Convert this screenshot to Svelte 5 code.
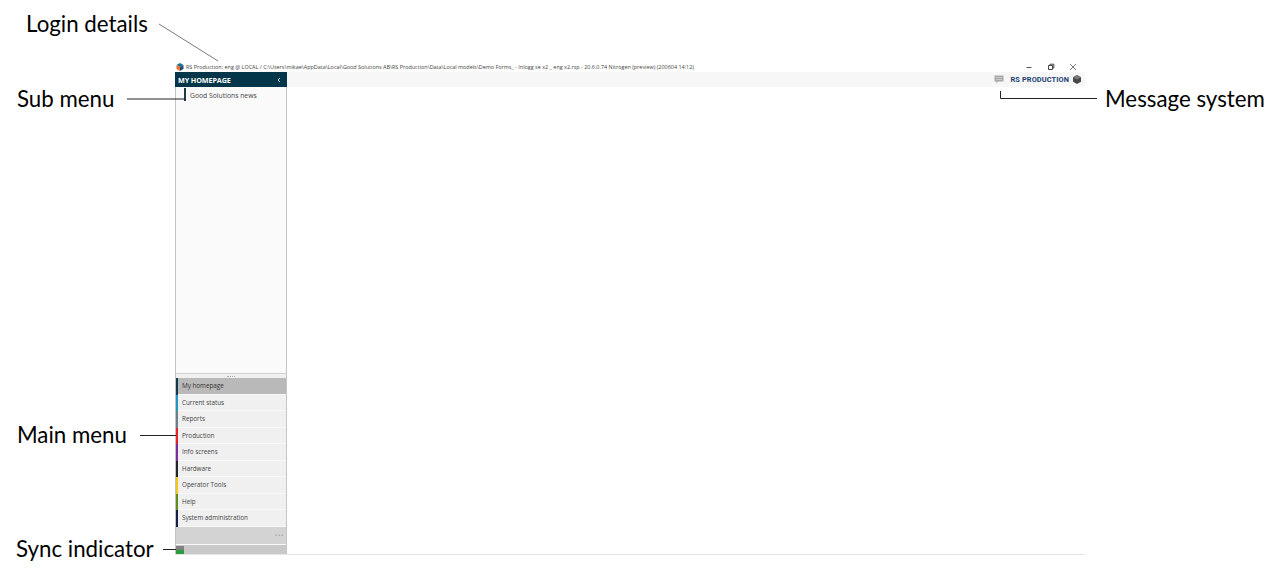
<script>
  // main menu entries with their colour strip
  const menu = [
    { label: "My homepage", color: "#0f3a4c", active: true },
    { label: "Current status", color: "#1e97c6" },
    { label: "Reports", color: "#6c7f8d" },
    { label: "Production", color: "#e8202a" },
    { label: "Info screens", color: "#7a2d9c" },
    { label: "Hardware", color: "#23272a" },
    { label: "Operator Tools", color: "#f4c61c" },
    { label: "Help", color: "#5f8e1e" },
    { label: "System administration", color: "#161f4e" },
  ];

  const title =
    "C:\\Users\\mikae\\AppData\\Local\\Good Solutions AB\\RS Production\\Data\\Local models\\Demo Forms_ - Inlogg se x2 _ eng x2.rsp - 20.6.0.74 Nitrogen (preview) (200604 14:12)";
</script>

<div class="page">
  <div class="window">
    <div class="titlebar">
      <svg class="app-icon" viewBox="0 0 8 8" width="8" height="8">
        <path d="M4 0 L7.5 2 L4 4 L0.5 2 Z" fill="#1f6f92" />
        <path d="M0.5 2 L4 4 L4 8 L0.5 6 Z" fill="#e8702a" />
        <path d="M7.5 2 L4 4 L4 8 L7.5 6 Z" fill="#2b4a6b" />
      </svg>
      <span class="title">RS Production: eng @ LOCAL / {title}</span>
      <div class="win-buttons">
        <svg viewBox="0 0 8 8" width="8" height="8"><path d="M1.5 4.5 H6.5" stroke="#555" /></svg>
        <svg viewBox="0 0 8 8" width="8" height="8">
          <path d="M1.5 2.5 H5.5 V6.5 H1.5 Z M3 2.5 V1.2 H6.8 V5 H5.5" fill="none" stroke="#444" />
        </svg>
        <svg viewBox="0 0 8 8" width="8" height="8"><path d="M1 1 L7 7 M7 1 L1 7" stroke="#555" stroke-width="0.8" /></svg>
      </div>
    </div>

    <div class="body">
      <aside class="sidebar">
        <div class="side-head">
          <span>MY HOMEPAGE</span>
          <svg viewBox="0 0 6 6" width="6" height="6"><path d="M4 1 L2 3 L4 5" fill="none" stroke="#cfd8dc" /></svg>
        </div>
        <div class="submenu">
          <div class="sub-item">Good Solutions news</div>
        </div>
        <div class="splitter"><span class="grip"></span></div>
        <nav class="menu">
          {#each menu as item}
            <div class="menu-item" class:active={item.active} style="border-left-color: {item.color}">{item.label}</div>
          {/each}
        </nav>
        <div class="more"><span>•••</span></div>
        <div class="status">
          <span class="sync"></span>
        </div>
      </aside>

      <main class="main">
        <div class="topbar">
          <svg class="msg-icon" viewBox="0 0 10 9" width="10" height="9">
            <path d="M0.5 0.5 H9.5 V6.5 H4 L2.5 8.5 V6.5 H0.5 Z" fill="#a8a8a8" />
            <path d="M2 2.5 H8 M2 4.5 H8" stroke="#d8d8d8" stroke-width="0.7" />
          </svg>
          <span class="brand">RS PRODUCTION</span>
          <svg viewBox="0 0 8 9" width="8" height="9">
            <path d="M4 0 L8 2.2 V6.8 L4 9 L0 6.8 V2.2 Z" fill="#45494c" />
            <path d="M4 0 L8 2.2 L4 4.4 L0 2.2 Z" fill="#7a7a7a" />
          </svg>
        </div>
      </main>
    </div>
  </div>

  <!-- callouts drawn over the screenshot -->
  <svg class="lines" width="1279" height="577">
    <path d="M159 24 L218 61" stroke="#555" stroke-width="0.8" fill="none" />
    <path d="M127 99 H185" stroke="#222" fill="none" />
    <path d="M140 435.5 H176" stroke="#222" fill="none" />
    <path d="M163 549.5 H176" stroke="#222" fill="none" />
    <path d="M1000.5 91 V98.5 H1097" stroke="#222" fill="none" />
  </svg>
  <span class="note login">Login details</span>
  <span class="note sub">Sub menu</span>
  <span class="note mainm">Main menu</span>
  <span class="note syncn">Sync indicator</span>
  <span class="note message">Message system</span>
</div>

<style>
  :global(body) {
    margin: 0;
    background: #fff;
  }

  .page {
    position: relative;
    width: 1279px;
    height: 577px;
    padding: 61px 0 0 175px;
    box-sizing: border-box;
    overflow: hidden;
    font-family: "Open Sans", sans-serif;
  }

  .window {
    width: 910px;
    height: 494px;
    display: flex;
    flex-direction: column;
  }

  /* ---- title bar ---- */
  .titlebar {
    height: 11px;
    display: flex;
    align-items: center;
    gap: 2px;
    padding-left: 1px;
    color: #444;
    font-size: 5.44px;
    white-space: nowrap;
  }

  .win-buttons {
    margin-left: auto;
    display: flex;
    gap: 14px;
    padding-right: 8px;
  }

  .win-buttons svg {
    display: block;
  }

  /* ---- body ---- */
  .body {
    flex: 1;
    display: flex;
    min-height: 0;
    border-bottom: 1px solid #e6e6e6;
  }

  .sidebar {
    width: 112px;
    box-sizing: border-box;
    display: flex;
    flex-direction: column;
    border-left: 1px solid #c4c4c4;
    border-right: 1px solid #c4c4c4;
    background: #fafafa;
  }

  .side-head {
    height: 15px;
    margin: 0 -1px;
    padding: 0 5px 0 3px;
    display: flex;
    align-items: center;
    justify-content: space-between;
    background: #023648;
    color: #fff;
    font-size: 7.2px;
    font-weight: 700;
    letter-spacing: -0.1px;
  }

  .submenu {
    flex: 1;
    padding: 1px 0 0 8px;
    background: #fafafa;
  }

  .sub-item {
    height: 13px;
    line-height: 16px;
    padding-left: 4px;
    border-left: 2px solid #1c3a4a;
    color: #444;
    font-size: 6.8px;
  }

  .splitter {
    height: 5px;
    display: flex;
    justify-content: center;
    align-items: center;
    background: #f0f0f0;
    border-top: 1px solid #d0d0d0;
    box-sizing: border-box;
  }

  .grip {
    width: 8px;
    border-top: 1px dotted #aaa;
  }

  .menu {
    display: flex;
    flex-direction: column;
  }

  .menu-item {
    height: 16.5px;
    line-height: 16px;
    box-sizing: border-box;
    padding-left: 4px;
    border-left: 2px solid;
    box-shadow: inset 0 -1px #f8f8f8;
    background: #f0f0f0;
    color: #444;
    font-size: 6.3px;
  }

  .menu-item.active {
    background: #b9b9b9;
    color: #333;
  }

  .more {
    height: 17.5px;
    display: flex;
    align-items: center;
    justify-content: flex-end;
    padding-right: 2px;
    background: #d3d3d3;
    color: #9a9a9a;
    font-size: 5px;
    letter-spacing: 0.2px;
    font-family: "DejaVu Sans", sans-serif;
  }

  .status {
    height: 9px;
    margin-top: 1px;
    background: #c9c9c9;
    display: flex;
    align-items: flex-end;
  }

  .sync {
    display: block;
    width: 8px;
    height: 8px;
    background: linear-gradient(#808080 0 4px, #2f9a3e 4px);
  }

  .main {
    flex: 1;
    background: #fff;
  }

  .topbar {
    height: 15px;
    padding-right: 4px;
    display: flex;
    align-items: center;
    justify-content: flex-end;
    gap: 4px;
    background: #f7f7f7;
  }

  .msg-icon {
    margin-right: 3px;
  }

  .brand {
    color: #1d3f74;
    font-size: 7.4px;
    font-weight: 700;
    font-family: "Roboto", sans-serif;
    letter-spacing: 0.1px;
  }

  /* ---- annotations ---- */
  .lines {
    position: absolute;
    left: 0;
    top: 0;
    pointer-events: none;
  }

  .note {
    position: absolute;
    font-family: Lato, sans-serif;
    font-size: 22.3px;
    line-height: 24px;
    color: #000;
    white-space: nowrap;
  }

  .login { left: 26px; top: 12px; }
  .sub { left: 17px; top: 87px; }
  .mainm { left: 17px; top: 423px; }
  .syncn { left: 16px; top: 537px; }
  .message { left: 1105px; top: 87px; }
</style>
